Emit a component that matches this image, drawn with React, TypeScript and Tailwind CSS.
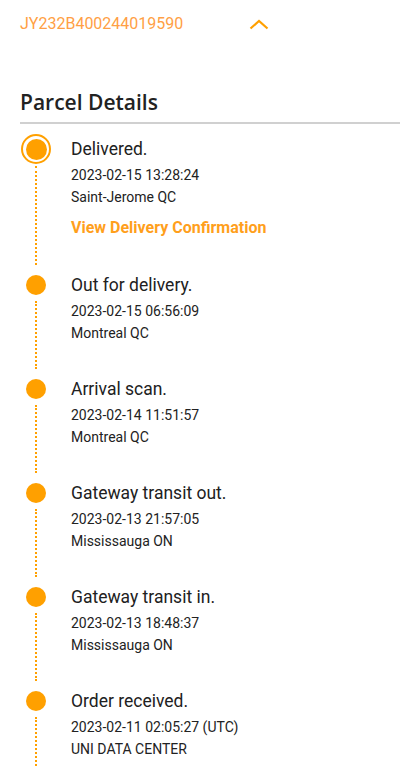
import React from "react";

type Scan = {
  status: string;
  time: string;
  place: string;
  current?: boolean;
};

const scans: Scan[] = [
  { status: "Delivered.", time: "2023-02-15 13:28:24", place: "Saint-Jerome QC", current: true },
  { status: "Out for delivery.", time: "2023-02-15 06:56:09", place: "Montreal QC" },
  { status: "Arrival scan.", time: "2023-02-14 11:51:57", place: "Montreal QC" },
  { status: "Gateway transit out.", time: "2023-02-13 21:57:05", place: "Mississauga ON" },
  { status: "Gateway transit in.", time: "2023-02-13 18:48:37", place: "Mississauga ON" },
  { status: "Order received.", time: "2023-02-11 02:05:27 (UTC)", place: "UNI DATA CENTER" },
];

function TimelineItem({ scan }: { scan: Scan }) {
  return (
    <div className="flex">
      {/* Dot + dotted line */}
      <div className="w-8 shrink-0 flex flex-col items-center">
        {scan.current ? (
          <div className="mt-[-2px] w-[30px] h-[30px] rounded-full border-2 border-[#ffa000] flex items-center justify-center">
            <div className="w-[21px] h-[21px] rounded-full bg-[#ffa000]" />
          </div>
        ) : (
          <div className="mt-[2px] w-5 h-5 rounded-full bg-[#ffa000]" />
        )}
        <div
          className={`flex-1 border-l-2 border-dotted border-[#ffa000] ${
            scan.current ? "mt-[2px] mb-[8px]" : "mt-[6px] mb-[8px]"
          }`}
        />
      </div>

      {/* Text */}
      <div className={`ml-[19px] ${scan.current ? "pt-px pb-[35px]" : "pb-[33px]"}`}>
        <div className="text-[17.5px] leading-6 text-[#212121]">{scan.status}</div>
        <div className="mt-[3px] text-[14px] leading-[22px] text-[#222]">{scan.time}</div>
        <div className="text-[14px] leading-[22px] text-[#222]">{scan.place}</div>
        {scan.current && (
          <a href="#" className="block mt-[10px] text-base leading-5 font-bold text-[#ff9f1c]">
            View Delivery Confirmation
          </a>
        )}
      </div>
    </div>
  );
}

export default function App() {
  return (
    <div className="w-[400px] h-[767px] overflow-hidden bg-white font-['Roboto',sans-serif]">
      {/* Tracking number header */}
      <div className="pl-5 pt-[12px] flex items-center justify-between w-[271px]">
        <span className="text-base leading-5 text-[#ff9f45]">JY232B400244019590</span>
        <svg className="w-6 h-6" viewBox="0 0 24 24" fill="none" stroke="#ffa000" strokeWidth={2.2}>
          <path d="M3.5 16.5 L12 9 L20.5 16.5" />
        </svg>
      </div>

      {/* Section */}
      <div className="pl-5 mt-[52px]">
        <h2 className="font-['Open_Sans',sans-serif] font-semibold text-[21px] leading-7 text-[#222] pb-[6px] border-b-2 border-[#d0d0d0]">
          Parcel Details
        </h2>
        <div className="pt-[12px]">
          {scans.map((s) => (
            <TimelineItem key={s.status} scan={s} />
          ))}
        </div>
      </div>
    </div>
  );
}
